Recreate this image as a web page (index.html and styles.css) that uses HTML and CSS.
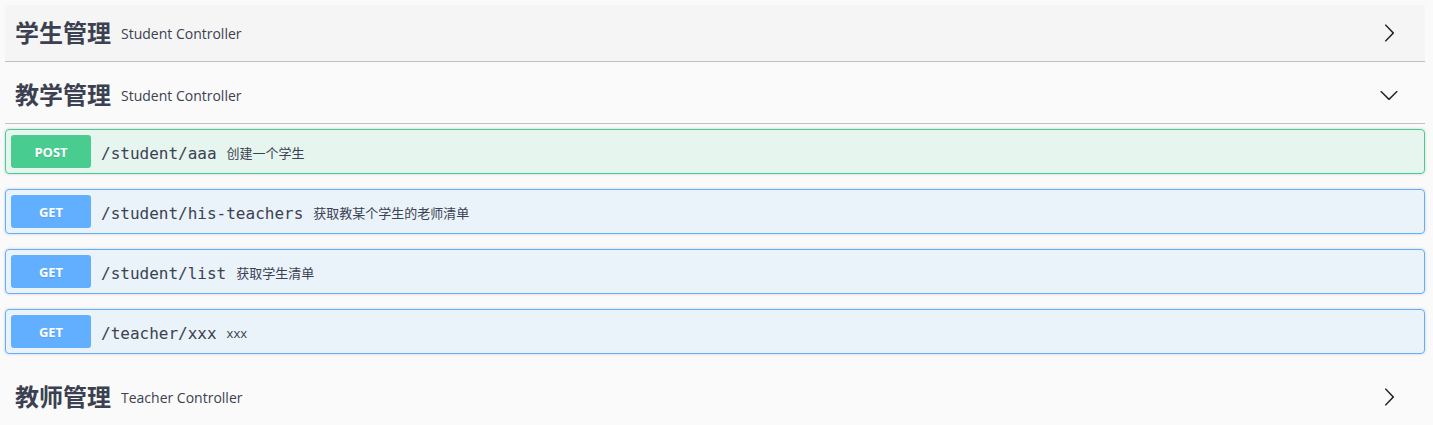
FILE: index.html
```html
<!DOCTYPE html>
<html lang="zh">
<head>
<meta charset="utf-8">
<title>Swagger</title>
<link rel="stylesheet" href="styles.css">
</head>
<body>
<div class="wrapper">
  <section class="tag-section">
    <div class="tag tag-hover">
      <h4 class="tag-name">学生管理</h4>
      <small class="tag-desc">Student Controller</small>
      <svg class="arrow" viewBox="0 0 20 20" width="20" height="20"><path d="M13.25 10L6.109 2.58c-.268-.27-.268-.707 0-.979.268-.27.701-.27.969 0l7.83 7.908c.268.271.268.709 0 .979l-7.830 7.908c-.268.271-.701.27-.969 0-.268-.269-.268-.707 0-.979L13.25 10z"/></svg>
    </div>
  </section>
  <section class="tag-section">
    <div class="tag">
      <h4 class="tag-name">教学管理</h4>
      <small class="tag-desc">Student Controller</small>
      <svg class="arrow" viewBox="0 0 20 20" width="20" height="20"><path d="M17.418 6.109c.272-.268.709-.268.979 0s.271.701 0 .969l-7.908 7.83c-.268.268-.707.268-.979 0l-7.908-7.83c-.27-.268-.27-.701 0-.969.271-.268.709-.268.979 0L10 13.25l7.418-7.141z"/></svg>
    </div>
    <div class="ops">
      <div class="opblock post">
        <span class="method">POST</span>
        <span class="path">/student/aaa</span>
        <span class="desc">创建一个学生</span>
      </div>
      <div class="opblock get">
        <span class="method">GET</span>
        <span class="path">/student/his-teachers</span>
        <span class="desc">获取教某个学生的老师清单</span>
      </div>
      <div class="opblock get">
        <span class="method">GET</span>
        <span class="path">/student/list</span>
        <span class="desc">获取学生清单</span>
      </div>
      <div class="opblock get">
        <span class="method">GET</span>
        <span class="path">/teacher/xxx</span>
        <span class="desc">xxx</span>
      </div>
    </div>
  </section>
  <section class="tag-section">
    <div class="tag">
      <h4 class="tag-name">教师管理</h4>
      <small class="tag-desc">Teacher Controller</small>
      <svg class="arrow" viewBox="0 0 20 20" width="20" height="20"><path d="M13.25 10L6.109 2.58c-.268-.27-.268-.707 0-.979.268-.27.701-.27.969 0l7.83 7.908c.268.271.268.709 0 .979l-7.83 7.908c-.268.271-.701.27-.969 0-.268-.269-.268-.707 0-.979L13.25 10z"/></svg>
    </div>
  </section>
</div>
</body>
</html>
```

FILE: styles.css
```css
html, body {
  margin: 0;
  padding: 0;
  background: #fafafa;
  color: #3b4151;
  font-family: "Open Sans", "Noto Sans CJK SC", sans-serif;
}
.wrapper {
  width: 1420px;
  padding: 5px 8px 0 5px;
}
.tag {
  display: flex;
  align-items: center;
  height: 36px;
  padding: 10px 20px 10px 10px;
  margin: 0 0 5px;
  border-bottom: 1px solid rgba(59, 65, 81, 0.3);
}
.tag-hover {
  background: rgba(0, 0, 0, 0.02);
}
.tag-name {
  margin: 0;
  font-size: 24px;
  font-weight: 700;
  line-height: 36px;
  font-family: "Open Sans", "Noto Sans CJK SC", sans-serif;
}
.tag-desc {
  flex: 1;
  padding: 2px 10px 0;
  font-size: 14px;
  font-weight: 400;
  line-height: 20px;
}
.arrow {
  fill: #222;
  margin-right: 6px;
}
.ops {
  display: flex;
  flex-direction: column;
}
.opblock {
  display: flex;
  align-items: center;
  padding: 5px;
  margin: 0 0 15px;
  border: 1px solid;
  border-radius: 4px;
  box-shadow: 0 0 3px rgba(0, 0, 0, 0.19);
}
.post {
  background: rgba(73, 204, 144, 0.1);
  border-color: #49cc90;
}
.get {
  background: rgba(97, 175, 254, 0.1);
  border-color: #61affe;
}
.method {
  width: 80px;
  height: 33px;
  line-height: 34px;
  text-align: center;
  border-radius: 3px;
  color: #fff;
  font-size: 13px;
  font-weight: 700;
  text-shadow: 0 1px 0 rgba(0, 0, 0, 0.1);
  font-family: "Open Sans", sans-serif;
}
.post .method { background: #49cc90; }
.get .method { background: #61affe; }
.path {
  padding: 3px 10px 0;
  font-family: "DejaVu Sans Mono", monospace;
  font-size: 16px;
  color: #3b4151;
}
.desc {
  padding-top: 2px;
  font-size: 13px;
  color: #3b4151;
  font-family: "Open Sans", "Noto Sans CJK SC", sans-serif;
}
```
